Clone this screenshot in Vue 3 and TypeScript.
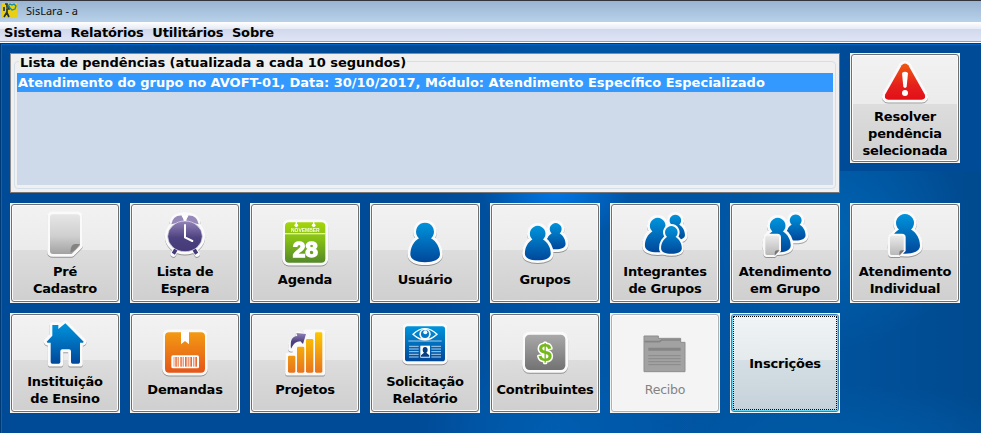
<script setup lang="ts">
import { ref } from 'vue'

interface Tile {
  icon: string
  lines: string[]
  disabled?: boolean
}

const menus: string[] = ['Sistema', 'Relatórios', 'Utilitários', 'Sobre']

const pending: string[] = [
  'Atendimento do grupo no AVOFT-01, Data: 30/10/2017, Módulo: Atendimento Específico Especializado',
]
const selected = ref(0)
const focused = ref('Inscrições')

const tiles: Tile[] = [
  { icon: 'page', lines: ['Pré', 'Cadastro'] },
  { icon: 'clock', lines: ['Lista de', 'Espera'] },
  { icon: 'calendar', lines: ['Agenda'] },
  { icon: 'user', lines: ['Usuário'] },
  { icon: 'pair', lines: ['Grupos'] },
  { icon: 'trio', lines: ['Integrantes', 'de Grupos'] },
  { icon: 'pairDoc', lines: ['Atendimento', 'em Grupo'] },
  { icon: 'userDoc', lines: ['Atendimento', 'Individual'] },
  { icon: 'house', lines: ['Instituição', 'de Ensino'] },
  { icon: 'box', lines: ['Demandas'] },
  { icon: 'chart', lines: ['Projetos'] },
  { icon: 'report', lines: ['Solicitação', 'Relatório'] },
  { icon: 'money', lines: ['Contribuintes'] },
  { icon: 'folder', lines: ['Recibo'], disabled: true },
  { icon: '', lines: ['Inscrições'] },
]

const alertTile: Tile = { icon: 'alert', lines: ['Resolver', 'pendência', 'selecionada'] }

// Placement of each person glyph, back to front: translate x, translate y, scale
const people: Record<string, [number, number, number][]> = {
  user: [[0, 0, 1]],
  pair: [[56.5, 6, 0.66], [-12.6, 11.3, 0.87]],
  trio: [[57, 5, 0.64], [-12.6, 11.3, 0.87], [40.6, 38.3, 0.7]],
  pairDoc: [[56.5, 4, 0.66], [-12.6, 11.3, 0.87]],
  userDoc: [[0, -2, 1]],
}

const barcode: number[] = [38, 43, 46, 52, 58, 61, 66, 72, 76, 82, 86, 90, 96, 101, 105]
</script>

<template>
  <div class="window">
    <svg class="defs" width="0" height="0">
      <defs>
        <linearGradient id="gBlue" x1="0" y1="0" x2="0" y2="1">
          <stop offset="0" stop-color="#0094dc" /><stop offset="1" stop-color="#00479a" />
        </linearGradient>
        <linearGradient id="gGray" x1="0" y1="0" x2="0" y2="1">
          <stop offset="0" stop-color="#e6e6e6" /><stop offset=".55" stop-color="#cfcfcf" /><stop offset="1" stop-color="#a3a1a1" />
        </linearGradient>
        <linearGradient id="gDoc" x1="0" y1="0" x2="0" y2="1">
          <stop offset="0" stop-color="#ededed" /><stop offset="1" stop-color="#b5b5b5" />
        </linearGradient>
        <linearGradient id="gPurple" x1="0" y1="0" x2="0" y2="1">
          <stop offset="0" stop-color="#9384b8" /><stop offset=".55" stop-color="#4d4180" /><stop offset="1" stop-color="#453a78" />
        </linearGradient>
        <linearGradient id="gGreen" x1="0" y1="0" x2="0" y2="1">
          <stop offset="0" stop-color="#a5d50a" /><stop offset=".45" stop-color="#83bd16" /><stop offset="1" stop-color="#55882a" />
        </linearGradient>
        <linearGradient id="gRed" x1="0" y1="0" x2="0" y2="1">
          <stop offset="0" stop-color="#f05a10" /><stop offset=".6" stop-color="#e5201b" /><stop offset="1" stop-color="#e20f18" />
        </linearGradient>
        <linearGradient id="gOrange" x1="0" y1="0" x2="0" y2="1">
          <stop offset="0" stop-color="#f39a12" /><stop offset="1" stop-color="#e4561a" />
        </linearGradient>
        <linearGradient id="gBars" gradientUnits="userSpaceOnUse" x1="0" y1="13" x2="0" y2="134">
          <stop offset="0" stop-color="#fcc800" /><stop offset="1" stop-color="#e8741c" />
        </linearGradient>
        <linearGradient id="gSteel" x1="0" y1="0" x2="0" y2="1">
          <stop offset="0" stop-color="#a9a9a9" /><stop offset="1" stop-color="#727272" />
        </linearGradient>
        <path
          id="person"
          vector-effect="non-scaling-stroke"
          d="M72 14a27 27 0 1 0 .01 0ZM55 60C37 70 28 90 28 109C28 125 46 133 72 133S117 125 117 109C117 90 107 70 89 60Z"
        />
        <g id="doc">
          <path d="M18 74H49Q57 74 57 82V122L41 138H18Q10 138 10 130V82Q10 74 18 74Z" fill="url(#gDoc)" stroke="#f8f8f8" stroke-width="6" />
          <path d="M56 121H47Q41 121 41 129V137Z" fill="#777" />
        </g>
      </defs>
    </svg>

    <header class="titlebar">
      <svg class="app-icon" viewBox="0 0 15 15">
        <rect width="15" height="15" fill="#ead012" />
        <path d="M3 1h2v3h2v2H5v4l2 4M5 9l-3 5M2 4v4" fill="none" stroke="#25343c" stroke-width="1.7" />
        <path d="M6 3l2-2 2 1 2-1 2 2-1 3-3 1-2-2Z" fill="none" stroke="#168ba5" stroke-width="1.3" />
      </svg>
      <span class="title">SisLara - a</span>
    </header>

    <nav class="menubar">
      <span v-for="m in menus" :key="m" class="menu">{{ m }}</span>
    </nav>

    <main class="desktop">
      <section class="panel">
        <fieldset class="group">
          <legend class="legend">Lista de pendências (atualizada a cada 10 segundos)</legend>
          <ul class="list">
            <li
              v-for="(p, i) in pending"
              :key="i"
              class="item"
              :class="{ active: i === selected }"
              @click="selected = i"
            >{{ p }}</li>
          </ul>
        </fieldset>
      </section>

      <button
        v-for="t in [alertTile, ...tiles]"
        :key="t.lines.join(' ')"
        class="tile"
        :class="{ tall: t.icon === 'alert', disabled: t.disabled, focused: focused === t.lines[0] }"
        :disabled="t.disabled"
      >
        <span class="face">
          <svg v-if="t.icon" class="icon" viewBox="0 0 144 144">
            <g v-if="t.icon === 'page'">
              <path d="M36 13H108Q117 13 117 22V107L92 132H36Q27 132 27 123V22Q27 13 36 13Z" class="halo" />
              <path d="M36 13H108Q117 13 117 22V107L92 132H36Q27 132 27 123V22Q27 13 36 13Z" fill="url(#gGray)" />
              <path d="M117 102H101Q89 103 88 128Q100 126 117 102Z" fill="#858381" />
            </g>

            <g v-else-if="t.icon === 'clock'">
              <g class="halo">
                <ellipse cx="72" cy="79" rx="52" ry="46" />
                <path d="M34 35Q42 15 72 15T110 35L100 50H44ZM44 117L37 132M100 117L108 132" />
              </g>
              <path d="M31 43Q36 15 63 17L70 34ZM113 43Q108 15 81 17L74 34Z" fill="#9688b8" />
              <path d="M62 18H82L76 27V35H68V27Z" fill="#fff" />
              <path d="M45 118L37 131M99 118L107 131" stroke="#453a78" stroke-width="11" />
              <ellipse cx="72" cy="79" rx="52" ry="46" fill="url(#gPurple)" stroke="#e9e6f0" stroke-width="2" />
              <path d="M72 45V82L94 93" fill="none" stroke="#fff" stroke-width="6" stroke-linecap="round" />
            </g>

            <g v-else-if="t.icon === 'calendar'">
              <rect x="12" y="13" width="121" height="121" rx="12" class="halo" />
              <rect x="12" y="13" width="121" height="121" rx="12" fill="url(#gGreen)" />
              <circle cx="46" cy="22" r="5.5" fill="#fff" /><circle cx="98" cy="22" r="5.5" fill="#fff" />
              <path d="M44 12h4v8h-4zM96 12h4v8h-4zM12 46H133V49H12Z" fill="#fff" />
              <text x="73" y="42" class="month" textLength="86" lengthAdjust="spacingAndGlyphs">NOVEMBER</text>
              <text x="73" y="116" class="day" textLength="76" lengthAdjust="spacingAndGlyphs">28</text>
            </g>

            <g v-else-if="people[t.icon]">
              <g v-for="(p, k) in people[t.icon]" :key="k">
                <use
                  href="#person"
                  class="halo screen"
                  :class="{ thin: t.icon === 'trio' && k === 2 }"
                  :transform="`translate(${p[0]} ${p[1]}) scale(${p[2]})`"
                />
                <use href="#person" fill="url(#gBlue)" :transform="`translate(${p[0]} ${p[1]}) scale(${p[2]})`" />
              </g>
              <use v-if="t.icon === 'pairDoc'" href="#doc" />
              <use v-if="t.icon === 'userDoc'" href="#doc" x="14" />
            </g>

            <g v-else-if="t.icon === 'house'">
              <path d="M34 15H52V27L73 10L128 65Q127 70 117 68V131H90V94Q90 88 84 88H64Q58 88 58 94V131H29V68Q19 70 17 65L34 47Z" class="halo" />
              <path d="M34 15H52V27L73 10L128 65Q127 70 117 68V126Q117 131 112 131H95Q90 131 90 126V94Q90 88 84 88H64Q58 88 58 94V126Q58 131 53 131H34Q29 131 29 126V68Q19 70 17 65L34 47Z" fill="url(#gBlue)" />
            </g>

            <g v-else-if="t.icon === 'box'">
              <rect x="12" y="13" width="120" height="121" rx="12" class="halo" />
              <rect x="12" y="13" width="120" height="121" rx="12" fill="url(#gOrange)" />
              <path d="M60 12H84V49L72 39L60 49Z" fill="#fff" />
              <rect x="31" y="82" width="83" height="39" rx="5" fill="#fff" />
              <rect v-for="(b, k) in barcode" :key="b" :x="b" y="87" :width="k % 3 ? 3 : 2" height="29" fill="#e96a35" />
            </g>

            <g v-else-if="t.icon === 'chart'">
              <g class="halo">
                <path d="M23 83H43V56H70V33H75V13H124V134H21V83ZM30 62Q28 38 52 32V18L74 28L57 48Q42 44 30 62Z" />
              </g>
              <rect x="21" y="83" width="22" height="51" rx="4" fill="url(#gBars)" />
              <rect x="48" y="56" width="22" height="78" rx="4" fill="url(#gBars)" />
              <rect x="75" y="33" width="22" height="101" rx="4" fill="url(#gBars)" />
              <rect x="102" y="13" width="22" height="121" rx="4" fill="url(#gBars)" />
              <path d="M30 62Q25 25 49 24L46 15L75 18L66 48L58 40Q40 40 30 62Z" fill="url(#gPurple)" />
            </g>

            <g v-else-if="t.icon === 'report'">
              <rect x="12" y="19" width="120" height="105" rx="8" class="halo" />
              <rect x="12" y="19" width="120" height="105" rx="8" fill="url(#gBlue)" />
              <path d="M36 43Q72 9 108 43Q72 77 36 43Z" fill="none" stroke="#fff" stroke-width="4" />
              <circle cx="72" cy="43" r="17" fill="#fff" /><circle cx="72" cy="42" r="12" fill="#007ac6" />
              <circle cx="73" cy="37" r="6" fill="#fff" />
              <path d="M22 63H122M24 79H53M24 87H53M24 95H53M24 103H53M24 111H53M91 79H120M91 87H120M91 95H120M91 103H120M91 111H120" stroke="#a9cce8" stroke-width="3" />
              <rect x="58" y="77" width="29" height="36" fill="#fff" />
              <path d="M72 81q8 0 8 9q0 6-4 8l9 8v4H60v-4l9-8q-4-2-4-8q0-9 7-9Z" fill="#063f83" />
            </g>

            <g v-else-if="t.icon === 'money'">
              <rect x="12" y="20" width="121" height="106" rx="14" class="halo" />
              <rect x="12" y="20" width="121" height="106" rx="14" fill="url(#gSteel)" />
              <text x="72" y="98" class="dollar">$</text>
            </g>

            <g v-else-if="t.icon === 'folder'">
              <path d="M9 24H52V31H119V43H132V131H9Z" fill="#a2a2a2" stroke="#8e8e8e" stroke-width="3" />
              <path d="M10 41H55L62 36H118" fill="none" stroke="#858585" stroke-width="5" />
              <path d="M22 64H119" stroke="#858585" stroke-width="9" />
              <path d="M22 83H119M22 92H119M22 101H119M22 110H119" stroke="#8a8a8a" stroke-width="3" />
            </g>

            <g v-else-if="t.icon === 'alert'">
              <path d="M62 25Q72 14 82 25L131 112Q137 127 122 128H22Q7 127 13 112Z" class="halo" />
              <path d="M62 25Q72 14 82 25L131 112Q137 127 122 128H22Q7 127 13 112Z" fill="url(#gRed)" />
              <path d="M63 48Q72 40 81 48L77 89Q72 96 67 89Z" fill="#fff" />
              <circle cx="72" cy="108" r="9" fill="#fff" />
            </g>
          </svg>
          <span class="label">
            <span v-for="l in t.lines" :key="l" class="line">{{ l }}</span>
          </span>
        </span>
      </button>
    </main>
  </div>
</template>

<style>
body {
  background: #fff;
}
</style>

<style scoped>
.window {
  width: 981px;
  height: 433px;
  display: flex;
  flex-direction: column;
  overflow: hidden;
  font: bold 13px/17px 'DejaVu Sans', Verdana, sans-serif;
  color: #000;
}
.defs {
  position: absolute;
}
.titlebar {
  box-sizing: border-box;
  height: 22px;
  flex: none;
  display: flex;
  align-items: center;
  gap: 9px;
  padding-left: 2px;
  padding-bottom: 2px;
  border-top: 1px solid #34343c;
  background: linear-gradient(#99b4d1, #b9d1ea);
}
.app-icon {
  width: 15px;
  height: 15px;
}
.title {
  font: 11px/16px 'Noto Sans', sans-serif;
  color: #111;
  letter-spacing: 0;
}
.menubar {
  box-sizing: border-box;
  height: 21px;
  flex: none;
  display: flex;
  gap: 8.6px;
  padding: 2px 0 0 4px;
  border-bottom: 1px solid #fff;
  box-shadow: inset 0 -1px #a0a0a0;
  background: linear-gradient(#fff, #e6eaf5 7px, #d0d8ec 7px, #e1e6f6);
  letter-spacing: -0.15px;
}
.desktop {
  box-sizing: border-box;
  flex: 1;
  display: grid;
  grid-template-columns: repeat(8, 110px);
  grid-template-rows: 140px 100px 100px;
  gap: 10px;
  align-content: start;
  padding: 9px 0 0 9px;
  border-left: 1px solid #003a75;
  border-top: 1px solid #003a75;
  box-shadow: inset 1px 1px #0065c8;
  background:
    linear-gradient(#004b98, #004b98) 839px 1px / 142px 126px no-repeat,
    radial-gradient(ellipse 75px 60px at 555px 143px, #0078e8, transparent),
    radial-gradient(ellipse 130px 120px at 835px 185px, #0062b0, transparent),
    radial-gradient(ellipse 200px 60px at 850px 400px, #005aa5, transparent),
    radial-gradient(ellipse 140px 100px at 555px 390px, #005db0, transparent),
    linear-gradient(90deg, #004b98 430px, #0055a5 560px, #0054a0 800px, #004a8f);
}
.panel {
  box-sizing: border-box;
  grid-column: span 7;
  padding: 0 3px 3px;
  border: 1px solid #8a8a8a;
  border-right-color: #777;
  border-bottom-color: #777;
  background: #f0f0f0;
  display: flex;
}
.group {
  box-sizing: border-box;
  flex: 1;
  min-width: 0;
  margin: 0;
  padding: 0 2px 3px 2px;
  border: 1px solid #d5dfe8;
  border-radius: 4px;
}
.legend {
  margin-left: 2px;
  padding: 0 1px;
  height: 15px;
  letter-spacing: -0.05px;
}
.list {
  margin: 4px 0 0;
  padding: 0;
  height: 112px;
  list-style: none;
  background: #cedaea;
}
.item {
  height: 19px;
  padding-left: 1px;
  line-height: 20px;
  white-space: nowrap;
}
.item.active {
  background: #3399ff;
  color: #fff;
}
.tile {
  box-sizing: border-box;
  height: 100px;
  padding: 1px;
  border: 0;
  background: #f3f3f3;
  font: inherit;
  color: inherit;
}
.tile.tall {
  height: 110px;
}
.face {
  box-sizing: border-box;
  width: 100%;
  height: 100%;
  display: flex;
  flex-direction: column;
  align-items: center;
  justify-content: center;
  gap: 5px;
  border: 1px solid #707070;
  border-radius: 3px;
  box-shadow: inset 0 0 0 1px #fbfbfb;
  background: linear-gradient(#f2f2f2, #ebebeb 46.5%, #dddddd 46.5%, #cfcfcf);
}
.tall .face {
  gap: 3px;
}
.disabled .face {
  border-color: #adb2b5;
  background: #f4f4f4;
}
.disabled .label {
  font-weight: normal;
  font-size: 12.5px;
  color: #838383;
}
.focused .face {
  border-color: #3c7fb1;
  box-shadow: inset 0 0 0 1px #60d8f8;
  outline: 1px dotted #000;
  outline-offset: -3px;
  background: linear-gradient(#f0f4f6, #e5eaed 46.5%, #d5dfe5 46.5%, #c5d1d9);
}
.icon {
  width: 48px;
  height: 48px;
  flex: none;
  overflow: visible;
  filter: drop-shadow(0 1px 0.6px #0005);
}
.disabled .icon {
  filter: none;
}
.halo {
  fill: #fafafa;
  stroke: #fafafa;
  stroke-width: 17px;
  stroke-linejoin: round;
  stroke-linecap: round;
}
.halo.screen {
  stroke-width: 5.5px;
}
.halo.screen.thin {
  stroke-width: 4px;
}
.month {
  font: bold 14px 'Liberation Sans', sans-serif;
  fill: #f4ffd8;
  text-anchor: middle;
}
.day {
  font: bold 68px 'Liberation Sans', sans-serif;
  fill: #fff;
  stroke: #fff;
  stroke-width: 4px;
  text-anchor: middle;
}
.dollar {
  font: bold 74px 'Liberation Sans', sans-serif;
  fill: #75b81c;
  stroke: #fff;
  stroke-width: 9px;
  stroke-linejoin: round;
  paint-order: stroke;
  text-anchor: middle;
}
.label,
.line {
  display: block;
  text-align: center;
  white-space: nowrap;
}
.label {
  letter-spacing: -0.2px;
}
</style>
